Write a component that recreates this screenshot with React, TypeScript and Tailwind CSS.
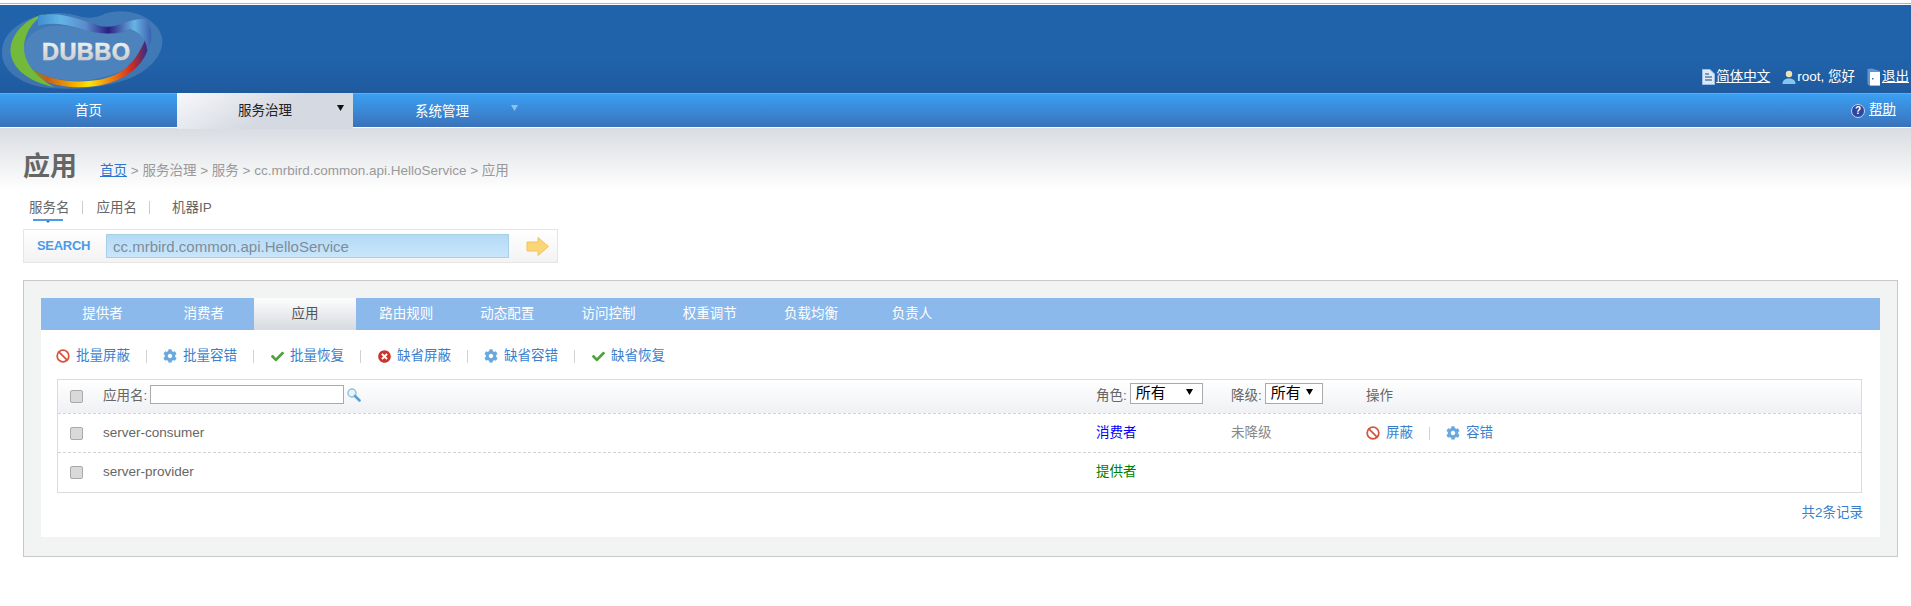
import { Ban } from "lucide-react"
import { FaCheck, FaCog, FaTimesCircle } from "react-icons/fa"

const font = "[font-family:'Liberation_Sans','Noto_Sans_CJK_SC',sans-serif]"

function Logo() {
  return (
    <svg width="170" height="88" viewBox="0 5 170 88" className="shrink-0">
      <defs>
        <linearGradient id="ring" x1="0" y1="0" x2="1" y2="0">
          <stop offset="0" stopColor="#5e9c3a" />
          <stop offset="0.18" stopColor="#c8601c" />
          <stop offset="0.36" stopColor="#f0a000" />
          <stop offset="0.52" stopColor="#ffe400" />
          <stop offset="0.68" stopColor="#ee8a10" />
          <stop offset="0.86" stopColor="#d22f1e" />
          <stop offset="1" stopColor="#2a2a8c" />
        </linearGradient>
        <linearGradient id="ribbon" x1="0" y1="0" x2="1" y2="0">
          <stop offset="0" stopColor="#3f8fd0" />
          <stop offset="0.2" stopColor="#62b4e6" />
          <stop offset="0.42" stopColor="#5a8ccc" />
          <stop offset="0.62" stopColor="#2a2080" />
          <stop offset="0.85" stopColor="#6ab4e4" />
          <stop offset="1" stopColor="#3a60b0" />
        </linearGradient>
        <linearGradient id="metal" x1="0" y1="0" x2="0" y2="1">
          <stop offset="0" stopColor="#f6f6f6" />
          <stop offset="1" stopColor="#c2c2c2" />
        </linearGradient>
      </defs>
      <path d="M2 50C4 28 30 14 60 13C76 13 86 22 102 15C118 8 142 11 155 25C168 38 163 56 146 69C126 85 86 91 50 88C24 86 0 72 2 50Z" fill="#fff" opacity="0.14" />
      <path d="M24 48C28 28 52 22 76 28C100 34 116 38 132 28C142 28 148 36 146 48C140 66 110 79 80 81C50 81 20 70 24 48Z" fill="#4d83bd" />
      <path d="M26 64C44 80 72 84 98 80C122 76 136 62 145 40L148 48C143 68 122 82 96 86C66 90 42 84 28 70Z" fill="url(#ring)" />
      <path d="M44 14C22 20 8 38 11 55C14 70 30 82 54 87C38 78 24 64 24 48C24 34 32 22 44 14Z" fill="#73ba3c" />
      <path d="M38 16C58 10 82 20 100 26C116 30 126 18 146 19C154 30 152 44 147 50C147 40 140 32 130 29C114 36 96 34 78 28C64 24 50 22 38 26Z" fill="url(#ribbon)" />
      <text x="42" y="60" fontFamily="Liberation Sans" fontWeight="700" fontSize="23.5" textLength="88" stroke="url(#metal)" strokeWidth="0.6" fill="url(#metal)">DUBBO</text>
    </svg>
  )
}

function DocIcon() {
  return (
    <svg width="13" height="16" viewBox="0 0 13 16">
      <path d="M0.5 0.5H8L12.5 5V15.5H0.5Z" fill="#dfe9f5" stroke="#9cc0e4" />
      <path d="M3 5H7M3 8H10M3 11H10" stroke="#5b7fa8" strokeWidth="1.4" />
    </svg>
  )
}

function UserIcon() {
  return (
    <svg width="14" height="16" viewBox="0 0 14 16">
      <circle cx="7" cy="5" r="3.2" fill="#f1e3b4" />
      <path d="M0.5 15C0.5 11 3.5 9.5 7 9.5S13.5 11 13.5 15Z" fill="#86c6ee" />
    </svg>
  )
}

function ExitIcon() {
  return (
    <svg width="14" height="18" viewBox="0 0 14 18">
      <path d="M0.5 1L5 0.5L13 3V17.5H2L0.5 16Z" fill="#5e97d4" />
      <rect x="3" y="4" width="10" height="13.5" fill="#fff" />
      <rect x="5" y="10" width="1.5" height="1.5" fill="#3a6fb0" />
    </svg>
  )
}

function HelpIcon() {
  return (
    <span className="flex h-[14px] w-[14px] items-center justify-center rounded-full border border-[#c4d4ee] bg-[#2b479f] text-[10px] font-bold leading-none text-white">
      ?
    </span>
  )
}

function Triangle({ color }: { color: string }) {
  return (
    <svg width="7" height="6" viewBox="0 0 7 6" className="shrink-0">
      <path d="M0 0H7L3.5 6Z" fill={color} />
    </svg>
  )
}

function Sep() {
  return <span className="h-[13px] w-px bg-[#d2d2d2]" />
}

function Action({ icon, label }: { icon: React.ReactNode; label: string }) {
  return (
    <span className="flex items-center gap-[6px]">
      <span className="flex w-[14px] justify-center">{icon}</span>
      <a className="text-[#3a7fce]">{label}</a>
    </span>
  )
}

const banIcon = <Ban size={14} strokeWidth={3} color="#d5563f" />
const gearIcon = <FaCog size={14} color="#6aa9e0" />
const checkIcon = <FaCheck size={13} color="#4ba33a" />
const crossIcon = <FaTimesCircle size={13} color="#c8372b" />

const tabs = ["提供者", "消费者", "应用", "路由规则", "动态配置", "访问控制", "权重调节", "负载均衡", "负责人"]

function Check() {
  return <span className="block h-[13px] w-[13px] rounded-[2px] border border-[#aaa] bg-[#d9d9d9]" />
}

function Select({ width, pad }: { width: string; pad: string }) {
  return (
    <span className={`mb-[6px] flex h-[21px] items-center justify-between border border-[#aaa] bg-white pl-[5px] text-[15px] text-black ${pad} ${width}`}>
      所有
      <span className="mb-[4px]">
        <Triangle color="#000" />
      </span>
    </span>
  )
}

const rowClass = "grid h-[39px] grid-cols-[45px_993px_135px_135px_1fr] items-center"

export default function App() {
  return (
    <div className={`min-h-[606px] bg-white text-[13.5px] ${font}`}>
      <div className="h-[5px] pt-[3px]">
        <div className="h-px bg-[#b4b4b4]" />
      </div>

      <header className="flex h-[88px] justify-between bg-[linear-gradient(#2063ab,#2063ab_60%,#1f5a9e)] text-white">
        <Logo />
        <div className="flex items-center gap-[12px] self-end pb-[6px] pr-[2px]">
          <span className="flex items-center gap-px">
            <DocIcon />
            <a className="underline">简体中文</a>
          </span>
          <span className="flex items-center gap-px">
            <UserIcon />
            root, 您好
          </span>
          <span className="flex items-center gap-px">
            <ExitIcon />
            <a className="underline">退出</a>
          </span>
        </div>
      </header>

      <nav className="relative flex h-[34px] border-t border-[#5aaef5] bg-[linear-gradient(#3a9ff2,#3a72ba)] text-white">
        <a className="flex w-[177px] items-center justify-center pt-px">首页</a>
        <a className="relative flex h-[36px] w-[176px] -mt-px items-center justify-center bg-[linear-gradient(150deg,#f7f8fa,#d5d9e1_55%)] text-[#222]">
          服务治理
          <span className="absolute left-[160px] top-[12px]">
            <Triangle color="#111" />
          </span>
        </a>
        <a className="relative flex w-[178px] items-center justify-center pt-[4px]">
          系统管理
          <span className="absolute left-[158px] top-[11px]">
            <Triangle color="#8cc0ee" />
          </span>
        </a>
        <span className="ml-auto flex items-center gap-[4px] pr-[15px]">
          <HelpIcon />
          <a className="underline">帮助</a>
        </span>
      </nav>

      <main className="border-t border-white bg-[linear-gradient(#d9dce1,#fff_62px)] px-[23px] pr-[13px]">
        <div className="flex h-[65px] items-end pb-[8px]">
          <h1 className="text-[27px] font-bold leading-[36px] text-[#666]">应用</h1>
          <p className="ml-[23px] pb-[4px] text-[#999]">
            <a className="text-[#2a78d0] underline">首页</a> &gt; 服务治理 &gt; 服务 &gt; cc.mrbird.common.api.HelloService &gt; 应用
          </p>
        </div>

        <div className="flex h-[36px] items-start gap-[12px] pl-[6px] pt-[5px] text-[#666]">
          <span className="relative">
            服务名
            <span className="absolute left-[4px] top-[21px] h-[2px] w-[30px] bg-[#4a9be8]" />
            <span className="absolute left-[17px] top-[23px]">
              <svg width="4" height="2" viewBox="0 0 4 2" className="block">
                <path d="M0 0H4L2 2Z" fill="#4a6f98" />
              </svg>
            </span>
          </span>
          <span className="mt-[3px] h-[13px] w-px bg-[#ccc]" />
          <span className="ml-[2px]">应用名</span>
          <span className="mt-[3px] h-[13px] w-px bg-[#ccc]" />
          <span className="ml-[10px]">机器IP</span>
        </div>

        <form className="flex h-[34px] w-[535px] items-center border border-[#e6e6e6] bg-[linear-gradient(#fff,#f3f3f3)] pl-[13px]">
          <span className="w-[69px] text-[13px] font-bold tracking-[-0.3px] text-[#4a9be8]">SEARCH</span>
          <input
            readOnly
            value="cc.mrbird.common.api.HelloService"
            className="h-[24px] w-[403px] border border-[#a8cfe8] bg-[linear-gradient(#b4daf6,#c8e6fb)] pl-[6px] text-[15px] text-[#7f8c9a] outline-none"
          />
          <svg width="23" height="19" viewBox="0 0 23 19" className="ml-[17px]">
            <path d="M1 5H12V0.5L22.5 9.5L12 18.5V14H1Z" fill="#fbd679" stroke="#f2c35c" />
          </svg>
        </form>

        <section className="mt-[17px] h-[277px] border border-[#c8c8c8] bg-[#f2f4f4] p-[17px]">
          <div className="h-[239px] bg-white">
            <div className="flex h-[32px] bg-[#8cb9eb] pl-[11px] text-white">
              {tabs.map((t) => (
                <a
                  key={t}
                  className={
                    t === "应用"
                      ? "flex w-[101.2px] items-center justify-center bg-[linear-gradient(#fdfdfd,#d6dae1)] text-[#555]"
                      : "flex w-[101.2px] items-center justify-center"
                  }
                >
                  {t}
                </a>
              ))}
            </div>

            <div className="flex h-[49px] items-center gap-[16px] pl-[15px] pt-[3px]">
              <Action icon={banIcon} label="批量屏蔽" />
              <Sep />
              <Action icon={gearIcon} label="批量容错" />
              <Sep />
              <Action icon={checkIcon} label="批量恢复" />
              <Sep />
              <Action icon={crossIcon} label="缺省屏蔽" />
              <Sep />
              <Action icon={gearIcon} label="缺省容错" />
              <Sep />
              <Action icon={checkIcon} label="缺省恢复" />
            </div>

            <div className="ml-[16px] w-[1805px] border border-[#dcdcdc] text-[#666]">
              <div className="grid h-[34px] grid-cols-[45px_993px_135px_135px_1fr] items-center border-b border-dashed border-[#d4d4d4] bg-[linear-gradient(#fff,#eff1f4)]">
                <span className="pl-[12px]">
                  <Check />
                </span>
                <span className="flex items-center gap-[3px]">
                  应用名:
                  <input className="mb-[4px] h-[19px] w-[194px] border border-[#aaa] bg-white" />
                  <svg width="14" height="14" viewBox="0 0 14 14" className="mb-[4px]">
                    <circle cx="5" cy="5" r="4" fill="#e8f4fa" stroke="#8fc2dc" strokeWidth="1.4" />
                    <path d="M8 8L12.5 12.5" stroke="#5aa0d0" strokeWidth="2.6" strokeLinecap="round" />
                  </svg>
                </span>
                <span className="flex items-center gap-[3px]">
                  角色:
                  <Select width="w-[73px]" pad="pr-[9px]" />
                </span>
                <span className="flex items-center gap-[3px]">
                  降级:
                  <Select width="w-[58px]" pad="pr-[9px]" />
                </span>
                <span>操作</span>
              </div>

              <div className={`${rowClass} border-b border-dashed border-[#d4d4d4]`}>
                <span className="pl-[12px]">
                  <Check />
                </span>
                <span>server-consumer</span>
                <span className="text-[#0000ff]">消费者</span>
                <span className="text-[#888]">未降级</span>
                <span className="flex items-center gap-[16px]">
                  <Action icon={banIcon} label="屏蔽" />
                  <Sep />
                  <Action icon={gearIcon} label="容错" />
                </span>
              </div>

              <div className={rowClass}>
                <span className="pl-[12px]">
                  <Check />
                </span>
                <span>server-provider</span>
                <span className="text-[#008000]">提供者</span>
              </div>
            </div>

            <p className="mt-[10px] w-[1822px] text-right text-[#3a7fce]">共2条记录</p>
          </div>
        </section>
      </main>
    </div>
  )
}
